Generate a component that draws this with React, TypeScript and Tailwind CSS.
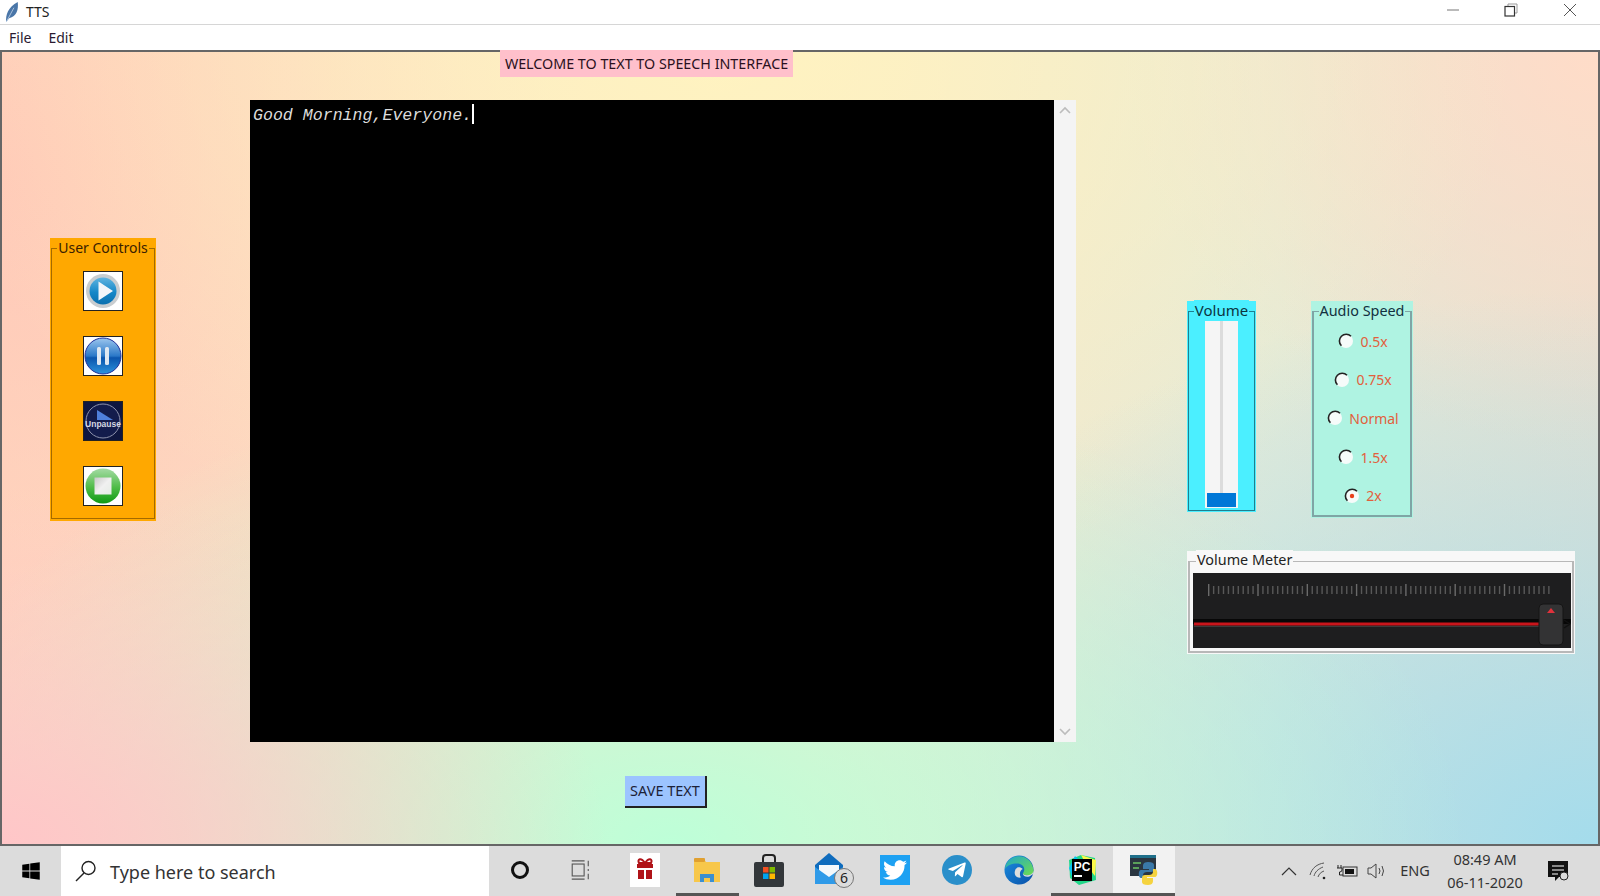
import { FaTelegramPlane, FaTwitter, FaWindows } from 'react-icons/fa';

const font = 'font-["Noto_Sans","Open_Sans",sans-serif]';

function PlayIcon() {
  return (
    <svg viewBox="0 0 38 38" className="h-[38px] w-[38px]">
      <defs>
        <linearGradient id="playFill" x1="0" y1="0" x2="0" y2="1">
          <stop offset="0" stopColor="#5fb4e0" />
          <stop offset="0.55" stopColor="#1587c8" />
          <stop offset="1" stopColor="#0a6fae" />
        </linearGradient>
      </defs>
      <rect width="38" height="38" fill="#fff" />
      <circle cx="19" cy="19" r="17" fill="#c9cdd0" />
      <circle cx="19" cy="19" r="13.5" fill="url(#playFill)" />
      <path d="M14.5 9.5 L29 19 L14.5 28.5 Z" fill="#f2f6fa" />
    </svg>
  );
}

function PauseIcon() {
  return (
    <svg viewBox="0 0 38 38" className="h-[38px] w-[38px]">
      <defs>
        <linearGradient id="pauseFill" x1="0" y1="0" x2="0" y2="1">
          <stop offset="0" stopColor="#9cc6ee" />
          <stop offset="0.5" stopColor="#2a78c8" />
          <stop offset="0.55" stopColor="#0b55ad" />
          <stop offset="1" stopColor="#2b93dd" />
        </linearGradient>
      </defs>
      <rect width="38" height="38" fill="#fff" />
      <circle cx="19" cy="19" r="18" fill="url(#pauseFill)" stroke="#23319a" strokeWidth="1" />
      <rect x="13" y="10" width="4" height="18" rx="1.5" fill="#dfe8f2" />
      <rect x="21" y="10" width="4" height="18" rx="1.5" fill="#dfe8f2" />
    </svg>
  );
}

function UnpauseIcon() {
  return (
    <svg viewBox="0 0 38 38" className="h-[38px] w-[38px]">
      <rect width="38" height="38" fill="#0e1640" />
      <circle cx="19" cy="19" r="17" fill="#131c4c" stroke="#8e93ad" strokeWidth="1" />
      <path d="M13 8 L29 18 L13 18 Z" fill="#4f80dc" />
      <text x="19" y="25" textAnchor="middle" fontSize="8.5" fontWeight="700" fill="#d5d8e2" fontFamily="Liberation Sans, sans-serif">
        Unpause
      </text>
    </svg>
  );
}

function StopIcon() {
  return (
    <svg viewBox="0 0 38 38" className="h-[38px] w-[38px]">
      <defs>
        <linearGradient id="stopFill" x1="0" y1="0" x2="0" y2="1">
          <stop offset="0" stopColor="#a4dba4" />
          <stop offset="0.55" stopColor="#4dbb46" />
          <stop offset="1" stopColor="#0f9a14" />
        </linearGradient>
        <linearGradient id="stopSquare" x1="0" y1="0" x2="1" y2="1">
          <stop offset="0" stopColor="#c8c8c8" />
          <stop offset="0.5" stopColor="#f0f0f0" />
          <stop offset="1" stopColor="#e5ece5" />
        </linearGradient>
      </defs>
      <rect width="38" height="38" fill="#fff" />
      <circle cx="19" cy="19" r="17.5" fill="url(#stopFill)" />
      <rect x="10.5" y="10.5" width="17" height="17" fill="url(#stopSquare)" />
    </svg>
  );
}

function ControlButton({ children }: { children: React.ReactNode }) {
  return <div className="h-[40px] w-[40px] border border-[#222] bg-white">{children}</div>;
}

function SpeedOption({ label, selected }: { label: string; selected?: boolean }) {
  return (
    <div className="flex h-[38.6px] items-center justify-center gap-[6px] pl-[2px]">
      <svg viewBox="0 0 16 16" className="h-[16px] w-[16px]">
        <circle cx="8" cy="8" r="7" fill="#f6fbfa" />
        <path d="M13 3.2 A6.6 6.6 0 1 0 3.4 12.8" fill="none" stroke="#222" strokeWidth="1.6" />
        {selected && <circle cx="8" cy="8" r="2.2" fill="#e8401c" />}
      </svg>
      <span className="text-[14px] text-[#e2603c]">{label}</span>
    </div>
  );
}

function VolumeMeter() {
  const ticks = Array.from({ length: 70 }, (_, i) => i);
  return (
    <svg viewBox="0 0 378 75" className="block h-[75px] w-[378px]">
      <rect width="378" height="75" fill="#1e1e1f" />
      {ticks.map((i) => (
        <rect
          key={i}
          x={15 + i * 4.93}
          y={i % 10 === 0 ? 11 : 13}
          width="1.4"
          height={i % 10 === 0 ? 12 : 8}
          fill={i % 10 === 0 ? '#6a6a6a' : '#585858'}
        />
      ))}
      <rect x="0" y="46" width="378" height="5" fill="#070707" />
      <rect x="1" y="49.5" width="346" height="3" fill="#c9151b" />
      <rect x="1" y="53" width="346" height="1" fill="#3c3c3c" />
      <path d="M371 47 L377 51 L371 55" fill="none" stroke="#111" strokeWidth="1.5" />
      <rect x="346" y="31" width="24" height="41" rx="4" fill="#333334" stroke="#151515" />
      <path d="M354 40 L358 35 L362 40 Z" fill="#e0323c" />
    </svg>
  );
}

function TaskSlot({ children, active, underline }: { children: React.ReactNode; active?: boolean; underline?: boolean }) {
  return (
    <div className={`flex h-full w-[62.4px] items-center justify-center pt-[1px] ${active ? 'bg-[#f2f2f2]' : ''} ${underline ? 'border-b-[3px] border-[#555]' : 'border-b-[3px] border-transparent'}`}>
      {children}
    </div>
  );
}

export default function App() {
  return (
    <div className={`flex h-screen w-[1600px] flex-col overflow-hidden bg-white text-[#222] ${font}`}>
      {/* title bar */}
      <div className="flex h-[25px] shrink-0 items-center border-b border-[#d6d6d6] bg-white">
        <svg viewBox="0 0 14 22" className="ml-[5px] h-[21px] w-[14px]">
          <path d="M1 21 C0 14 3 5 13 0 C14 8 12 15 4 17 Z" fill="#4a76a8" />
          <path d="M1 21 L9 6" stroke="#c8d8ea" strokeWidth="0.8" />
        </svg>
        <span className="mb-[2px] ml-[7px] text-[14px]">TTS</span>
        <div className="mb-[5px] ml-auto flex h-full items-center">
          <svg viewBox="0 0 14 14" className="mr-[44px] h-[14px] w-[14px]">
            <path d="M1 7 H13" stroke="#777" strokeWidth="1" />
          </svg>
          <svg viewBox="0 0 14 14" className="mr-[45px] h-[14px] w-[14px]">
            <path d="M4 3 V1 H13 V10 H11" fill="none" stroke="#999" strokeWidth="1" />
            <rect x="1" y="3.5" width="9.5" height="9.5" fill="none" stroke="#333" strokeWidth="1.2" />
          </svg>
          <svg viewBox="0 0 14 14" className="mr-[23px] h-[14px] w-[14px]">
            <path d="M1 1 L13 13 M13 1 L1 13" stroke="#555" strokeWidth="1" />
          </svg>
        </div>
      </div>

      {/* menu bar */}
      <div className="flex h-[25px] shrink-0 items-center gap-[17px] bg-white pl-[9px] text-[14px] text-[#2a1a30]">
        <span>File</span>
        <span>Edit</span>
      </div>

      {/* window body */}
      <div className="flex min-h-0 flex-1 border-2 border-[#666] bg-[radial-gradient(ellipse_38%_45%_at_0%_100%,#ffc6c8_0%,#ffc6c800_100%),radial-gradient(ellipse_50%_60%_at_42%_100%,#bdffd8_0%,#bdffd800_100%),radial-gradient(ellipse_50%_70%_at_100%_100%,#a4dcec_0%,#a4dcec00_100%),radial-gradient(ellipse_50%_70%_at_45%_0%,#fff3c0_0%,#fff3c000_100%),radial-gradient(ellipse_30%_50%_at_100%_0%,#ffdcc8_0%,#ffdcc800_100%),radial-gradient(ellipse_35%_75%_at_0%_15%,#ffc9b8_0%,#ffc9b800_100%),linear-gradient(90deg,#ffd9c0_0%,#f6e8cc_55%,#e4ead8_80%,#e8e0d0_100%)]">
        {/* user controls */}
        <div className="ml-[48px] mt-[186px] h-[283px] w-[106px] shrink-0 bg-[#ffa800] px-[1px] pt-[10px] pb-[2px]">
          <div className="h-full border border-[#a36a00]">
            <div className="mx-auto -mt-[11px] w-fit bg-[#ffa800] px-[1px] text-[14px] leading-[20px] text-[#3a2000]">User Controls</div>
            <div className="mt-[13px] flex flex-col items-center gap-[25px]">
              <ControlButton><PlayIcon /></ControlButton>
              <ControlButton><PauseIcon /></ControlButton>
              <ControlButton><UnpauseIcon /></ControlButton>
              <ControlButton><StopIcon /></ControlButton>
            </div>
          </div>
        </div>

        {/* text area */}
        <div className="ml-[94px] flex w-[826px] shrink-0 flex-col">
          <div className="relative -mt-[2px] ml-[250px] flex h-[27px] w-[293px] items-center justify-center whitespace-nowrap bg-[#ffc0cb] text-[14.3px] text-[#2a1020]">
            WELCOME TO TEXT TO SPEECH INTERFACE
          </div>
          <div className="mt-[23px] flex h-[642px]">
            <div className="w-[804px] bg-black pl-[3px] font-['Liberation_Mono',monospace] text-[16.6px] italic leading-[22px] text-[#dcdcdc]">
              Good Morning,Everyone.<span className="inline-block h-[20px] w-[2px] translate-y-[4px] bg-white" />
            </div>
            <div className="flex w-[22px] flex-col items-center justify-between bg-[#f4f4f4] py-[6px]">
              <svg viewBox="0 0 12 8" className="h-[8px] w-[12px]">
                <path d="M1 7 L6 2 L11 7" fill="none" stroke="#bcbcbc" strokeWidth="1.6" />
              </svg>
              <svg viewBox="0 0 12 8" className="h-[8px] w-[12px]">
                <path d="M1 1 L6 6 L11 1" fill="none" stroke="#bcbcbc" strokeWidth="1.6" />
              </svg>
            </div>
          </div>
          <button className="ml-[375px] mt-[34px] h-[32px] w-[82px] border-r-2 border-b-2 border-[#222] bg-[#9cc4ff] text-[14.5px] text-[#1c2238]">
            SAVE TEXT
          </button>
        </div>

        {/* right side panels */}
        <div className="ml-[111px] mt-[249px] flex w-[388px] shrink-0 flex-col">
          <div className="flex items-start">
            <div className="h-[211px] w-[69px] bg-[#4befff] px-[1px] pt-[10px] pb-[1px]">
              <div className="flex h-full flex-col items-center border border-[#1f7f8f]">
                <div className="-mt-[12px] bg-[#4befff] px-[1px] text-[15px] leading-[20px] text-[#0c3440]">Volume</div>
                <div className="mt-[1px] flex h-[187px] w-[33px] flex-col items-center justify-end bg-[#f5f5f5] pb-[1px]">
                  <div className="h-[172px] w-[3px] bg-[#dcdcdc]" />
                  <div className="h-[14px] w-[29px] bg-[#0078d7]" />
                </div>
              </div>
            </div>
            <div className="ml-[55px] h-[217px] w-[102px] bg-[#aff3e2] px-[1px] pt-[10px] pb-[1px]">
              <div className="h-full border-2 border-t border-[#7fa5a5]">
                <div className="mx-auto -mt-[11px] w-fit bg-[#aff3e2] px-[1px] text-[14.4px] leading-[20px] text-[#123040]">Audio Speed</div>
                <div className="mt-[1px] flex flex-col">
                  <SpeedOption label="0.5x" />
                  <SpeedOption label="0.75x" />
                  <SpeedOption label="Normal" />
                  <SpeedOption label="1.5x" />
                  <SpeedOption label="2x" selected />
                </div>
              </div>
            </div>
          </div>

          <div className="mt-[33px] h-[103px] w-[388px] bg-[#f8f8f8] px-[1px] pt-[10px] pb-[1px]">
            <div className="h-full border-2 border-t border-[#b8b8b8] pl-[3px]">
              <div className="ml-[3px] -mt-[12px] w-fit bg-[#f8f8f8] px-[1px] text-[14.4px] leading-[20px] text-[#222]">Volume Meter</div>
              <div className="mt-[3px]">
                <VolumeMeter />
              </div>
            </div>
          </div>
        </div>
      </div>

      {/* taskbar */}
      <div className="flex h-[50px] shrink-0 items-center bg-[#dcdcdc]">
        <div className="flex h-full w-[61px] items-center justify-center">
          <FaWindows className="h-[20px] w-[20px] text-black" />
        </div>
        <div className="flex h-full w-[428px] items-center bg-white">
          <svg viewBox="0 0 24 24" className="ml-[13px] h-[24px] w-[24px]">
            <circle cx="14.5" cy="9" r="6.5" fill="none" stroke="#222" strokeWidth="1.4" />
            <path d="M10 14 L2 22" stroke="#222" strokeWidth="1.4" />
          </svg>
          <span className="ml-[12px] mt-[2px] text-[18px] text-[#333]">Type here to search</span>
        </div>

        <TaskSlot>
          <div className="h-[18px] w-[18px] rounded-full border-[3px] border-[#111]" />
        </TaskSlot>
        <TaskSlot>
          <svg viewBox="0 0 24 24" className="mr-[5px] h-[22px] w-[22px]">
            <path d="M3 2 H17 M3 22 H17" stroke="#555" strokeWidth="1.2" />
            <rect x="3.5" y="5.5" width="13" height="13" fill="none" stroke="#555" strokeWidth="1.2" />
            <path d="M21 2 V8 M21 11 V13 M21 16 V22" stroke="#555" strokeWidth="1.2" />
          </svg>
        </TaskSlot>
        <TaskSlot>
          <svg viewBox="0 0 30 34" className="h-[34px] w-[30px]">
            <rect width="30" height="34" fill="#fff" />
            <path d="M15 10 C11 4 7 6 9 10 Z M15 10 C19 4 23 6 21 10 Z" fill="none" stroke="#b01318" strokeWidth="2" />
            <rect x="7" y="11" width="16" height="4" fill="#b01318" />
            <rect x="8" y="17" width="6" height="9" fill="#b01318" />
            <rect x="16" y="17" width="6" height="9" fill="#b01318" />
          </svg>
        </TaskSlot>
        <TaskSlot underline>
          <svg viewBox="0 0 28 28" className="h-[28px] w-[28px]">
            <path d="M1 3 H11 L13 6 H27 V26 H1 Z" fill="#f7c74a" />
            <rect x="1" y="2" width="11" height="4" rx="1" fill="#e0a030" />
            <path d="M7 26 V18 H21 V26 H17 V22 H11 V26 Z" fill="#3b8fd0" />
          </svg>
        </TaskSlot>
        <TaskSlot>
          <svg viewBox="0 0 30 34" className="mr-[2px] h-[34px] w-[30px]">
            <path d="M9 10 V5 Q9 2 12 2 H18 Q21 2 21 5 V10" fill="none" stroke="#222" strokeWidth="2" />
            <rect x="0" y="9" width="30" height="25" rx="2" fill="#33373a" />
            <rect x="9" y="14" width="5.5" height="5.5" fill="#f25022" />
            <rect x="15.5" y="14" width="5.5" height="5.5" fill="#7fba00" />
            <rect x="9" y="20.5" width="5.5" height="5.5" fill="#00a4ef" />
            <rect x="15.5" y="20.5" width="5.5" height="5.5" fill="#ffb900" />
          </svg>
        </TaskSlot>
        <TaskSlot>
          <svg viewBox="0 0 42 36" className="ml-[6px] h-[36px] w-[42px]">
            <path d="M1 13 L15 1 L29 13 V32 H1 Z" fill="#0f6cbd" />
            <path d="M5 13 H25 V24 L15 28 L5 22 Z" fill="#f4f8fb" />
            <path d="M1 15 L15 25 L29 15 V32 H1 Z" fill="#2f9ae8" />
            <circle cx="30" cy="26" r="9.5" fill="#dcdcdc" stroke="#777" strokeWidth="1" />
            <text x="30" y="31" textAnchor="middle" fontSize="14" fill="#222" fontFamily="Noto Sans, sans-serif">6</text>
          </svg>
        </TaskSlot>
        <TaskSlot>
          <div className="flex h-[30px] w-[30px] items-center justify-center bg-[#1da1f2]">
            <FaTwitter className="h-[24px] w-[24px] text-white" />
          </div>
        </TaskSlot>
        <TaskSlot>
          <div className="flex h-[30px] w-[30px] items-center justify-center rounded-full bg-[#2a8fca]">
            <FaTelegramPlane className="h-[20px] w-[20px] text-white" />
          </div>
        </TaskSlot>
        <TaskSlot>
          <svg viewBox="0 0 32 32" className="h-[30px] w-[30px]">
            <defs>
              <linearGradient id="edgeA" x1="0" y1="0" x2="1" y2="1">
                <stop offset="0" stopColor="#1fa8c8" />
                <stop offset="1" stopColor="#6fdc50" />
              </linearGradient>
              <linearGradient id="edgeB" x1="0" y1="0" x2="1" y2="1">
                <stop offset="0" stopColor="#1a8fe0" />
                <stop offset="1" stopColor="#0a4fa8" />
              </linearGradient>
            </defs>
            <circle cx="16" cy="16" r="15.5" fill="url(#edgeB)" />
            <path d="M1 15 C3 -3 29 -4 31.5 16 C32 22 24 23 20 20 C24 14 20 9 14 9 C8 9 3 11 1 15 Z" fill="url(#edgeA)" />
            <path d="M20 20 C24 23 30 22 31.5 17 V20 L27 23 Q21 24 20 20 Z M12 16 C10 21 13 25 18 24 C16 21 17 16 20 15 C17 12 13 13 12 16 Z" fill="#dcdcdc" />
          </svg>
        </TaskSlot>
        <TaskSlot underline>
          <svg viewBox="0 0 30 32" className="h-[32px] w-[30px]">
            <path d="M2 6 L14 1 L28 4 L29 26 L12 31 L3 24 Z" fill="#21d789" />
            <path d="M14 1 L29 6 L28 22 L20 12 Z" fill="#fcf84a" />
            <path d="M2 14 L8 2 L14 8 L6 26 Z" fill="#07c3f2" />
            <rect x="5" y="5" width="20" height="22" fill="#000" />
            <text x="15" y="17" textAnchor="middle" fontSize="12" fontWeight="700" fill="#fff" fontFamily="Liberation Sans, sans-serif">PC</text>
            <rect x="7" y="21" width="8" height="2" fill="#fff" />
          </svg>
        </TaskSlot>
        <TaskSlot active underline>
          <svg viewBox="0 0 28 32" className="h-[32px] w-[28px]">
            <rect x="0" y="1" width="26" height="21" fill="#2a3540" />
            <rect x="0" y="1" width="26" height="3" fill="#1f6f8a" />
            <rect x="3" y="8" width="8" height="2" fill="#5aa05a" />
            <rect x="3" y="13" width="6" height="2" fill="#5aa05a" />
            <path d="M18 8 C13 8 13 11 13 13 V15 H19 V16 H11 C8 16 8 24 11 24 H13 V21 C13 19 15 18 17 18 H21 C23 18 24 17 24 15 V11 C24 9 22 8 18 8 Z" fill="#3a78a8" />
            <path d="M18 31 C23 31 23 28 23 26 V24 H17 V23 H25 C28 23 28 15 25 15 H23 V18 C23 20 21 21 19 21 H15 C13 21 12 22 12 24 V28 C12 30 14 31 18 31 Z" fill="#f5d33f" />
          </svg>
        </TaskSlot>

        {/* tray */}
        <div className="ml-auto flex h-full items-center pr-[16px]">
          <div className="flex w-[29.5px] justify-center">
            <svg viewBox="0 0 16 10" className="h-[10px] w-[16px]">
              <path d="M1 9 L8 2 L15 9" fill="none" stroke="#333" strokeWidth="1.2" />
            </svg>
          </div>
          <div className="flex w-[29.5px] justify-center">
            <svg viewBox="0 0 18 18" className="h-[18px] w-[18px]">
              <path d="M1 13 C3 6 8 2 15 1 M5 14 C6 10 9 7 14 5 M9 15 C10 12 12 10 15 9" fill="none" stroke="#555" strokeWidth="1" />
              <circle cx="15" cy="16" r="1.3" fill="#222" />
            </svg>
          </div>
          <div className="flex w-[29.5px] justify-center">
            <svg viewBox="0 0 22 14" className="h-[14px] w-[22px]">
              <rect x="6" y="3" width="14" height="9" fill="none" stroke="#333" strokeWidth="1" />
              <rect x="8" y="5" width="9" height="5" fill="#111" />
              <path d="M1 1 V4 M4 1 V4 M0 4 H5 V6 Q5 8 2.5 8 V11 H6" fill="none" stroke="#222" strokeWidth="1" />
            </svg>
          </div>
          <div className="flex w-[29.5px] justify-center">
            <svg viewBox="0 0 20 16" className="h-[16px] w-[20px]">
              <path d="M1 5 H4 L9 1 V15 L4 11 H1 Z" fill="none" stroke="#444" strokeWidth="1" />
              <path d="M12 5 Q14 8 12 11 M15 3 Q18 8 15 13" fill="none" stroke="#444" strokeWidth="1" />
            </svg>
          </div>
          <div className="w-[46px] text-center text-[14.5px] text-[#333]">ENG</div>
          <div className="w-[94px] text-center text-[14.5px] leading-[23px] text-[#333]">
            <div>08:49 AM</div>
            <div>06-11-2020</div>
          </div>
          <div className="flex w-[52px] justify-center">
            <svg viewBox="0 0 22 22" className="h-[22px] w-[22px]">
              <path d="M1 1 H21 V17 H12 L8 21 V17 H1 Z" fill="#111" />
              <path d="M5 6 H17 M5 10 H17 M5 14 H11" stroke="#fff" strokeWidth="1.2" />
              <circle cx="17" cy="16" r="4" fill="#dcdcdc" stroke="#222" strokeWidth="1" />
            </svg>
          </div>
        </div>
      </div>
    </div>
  );
}
